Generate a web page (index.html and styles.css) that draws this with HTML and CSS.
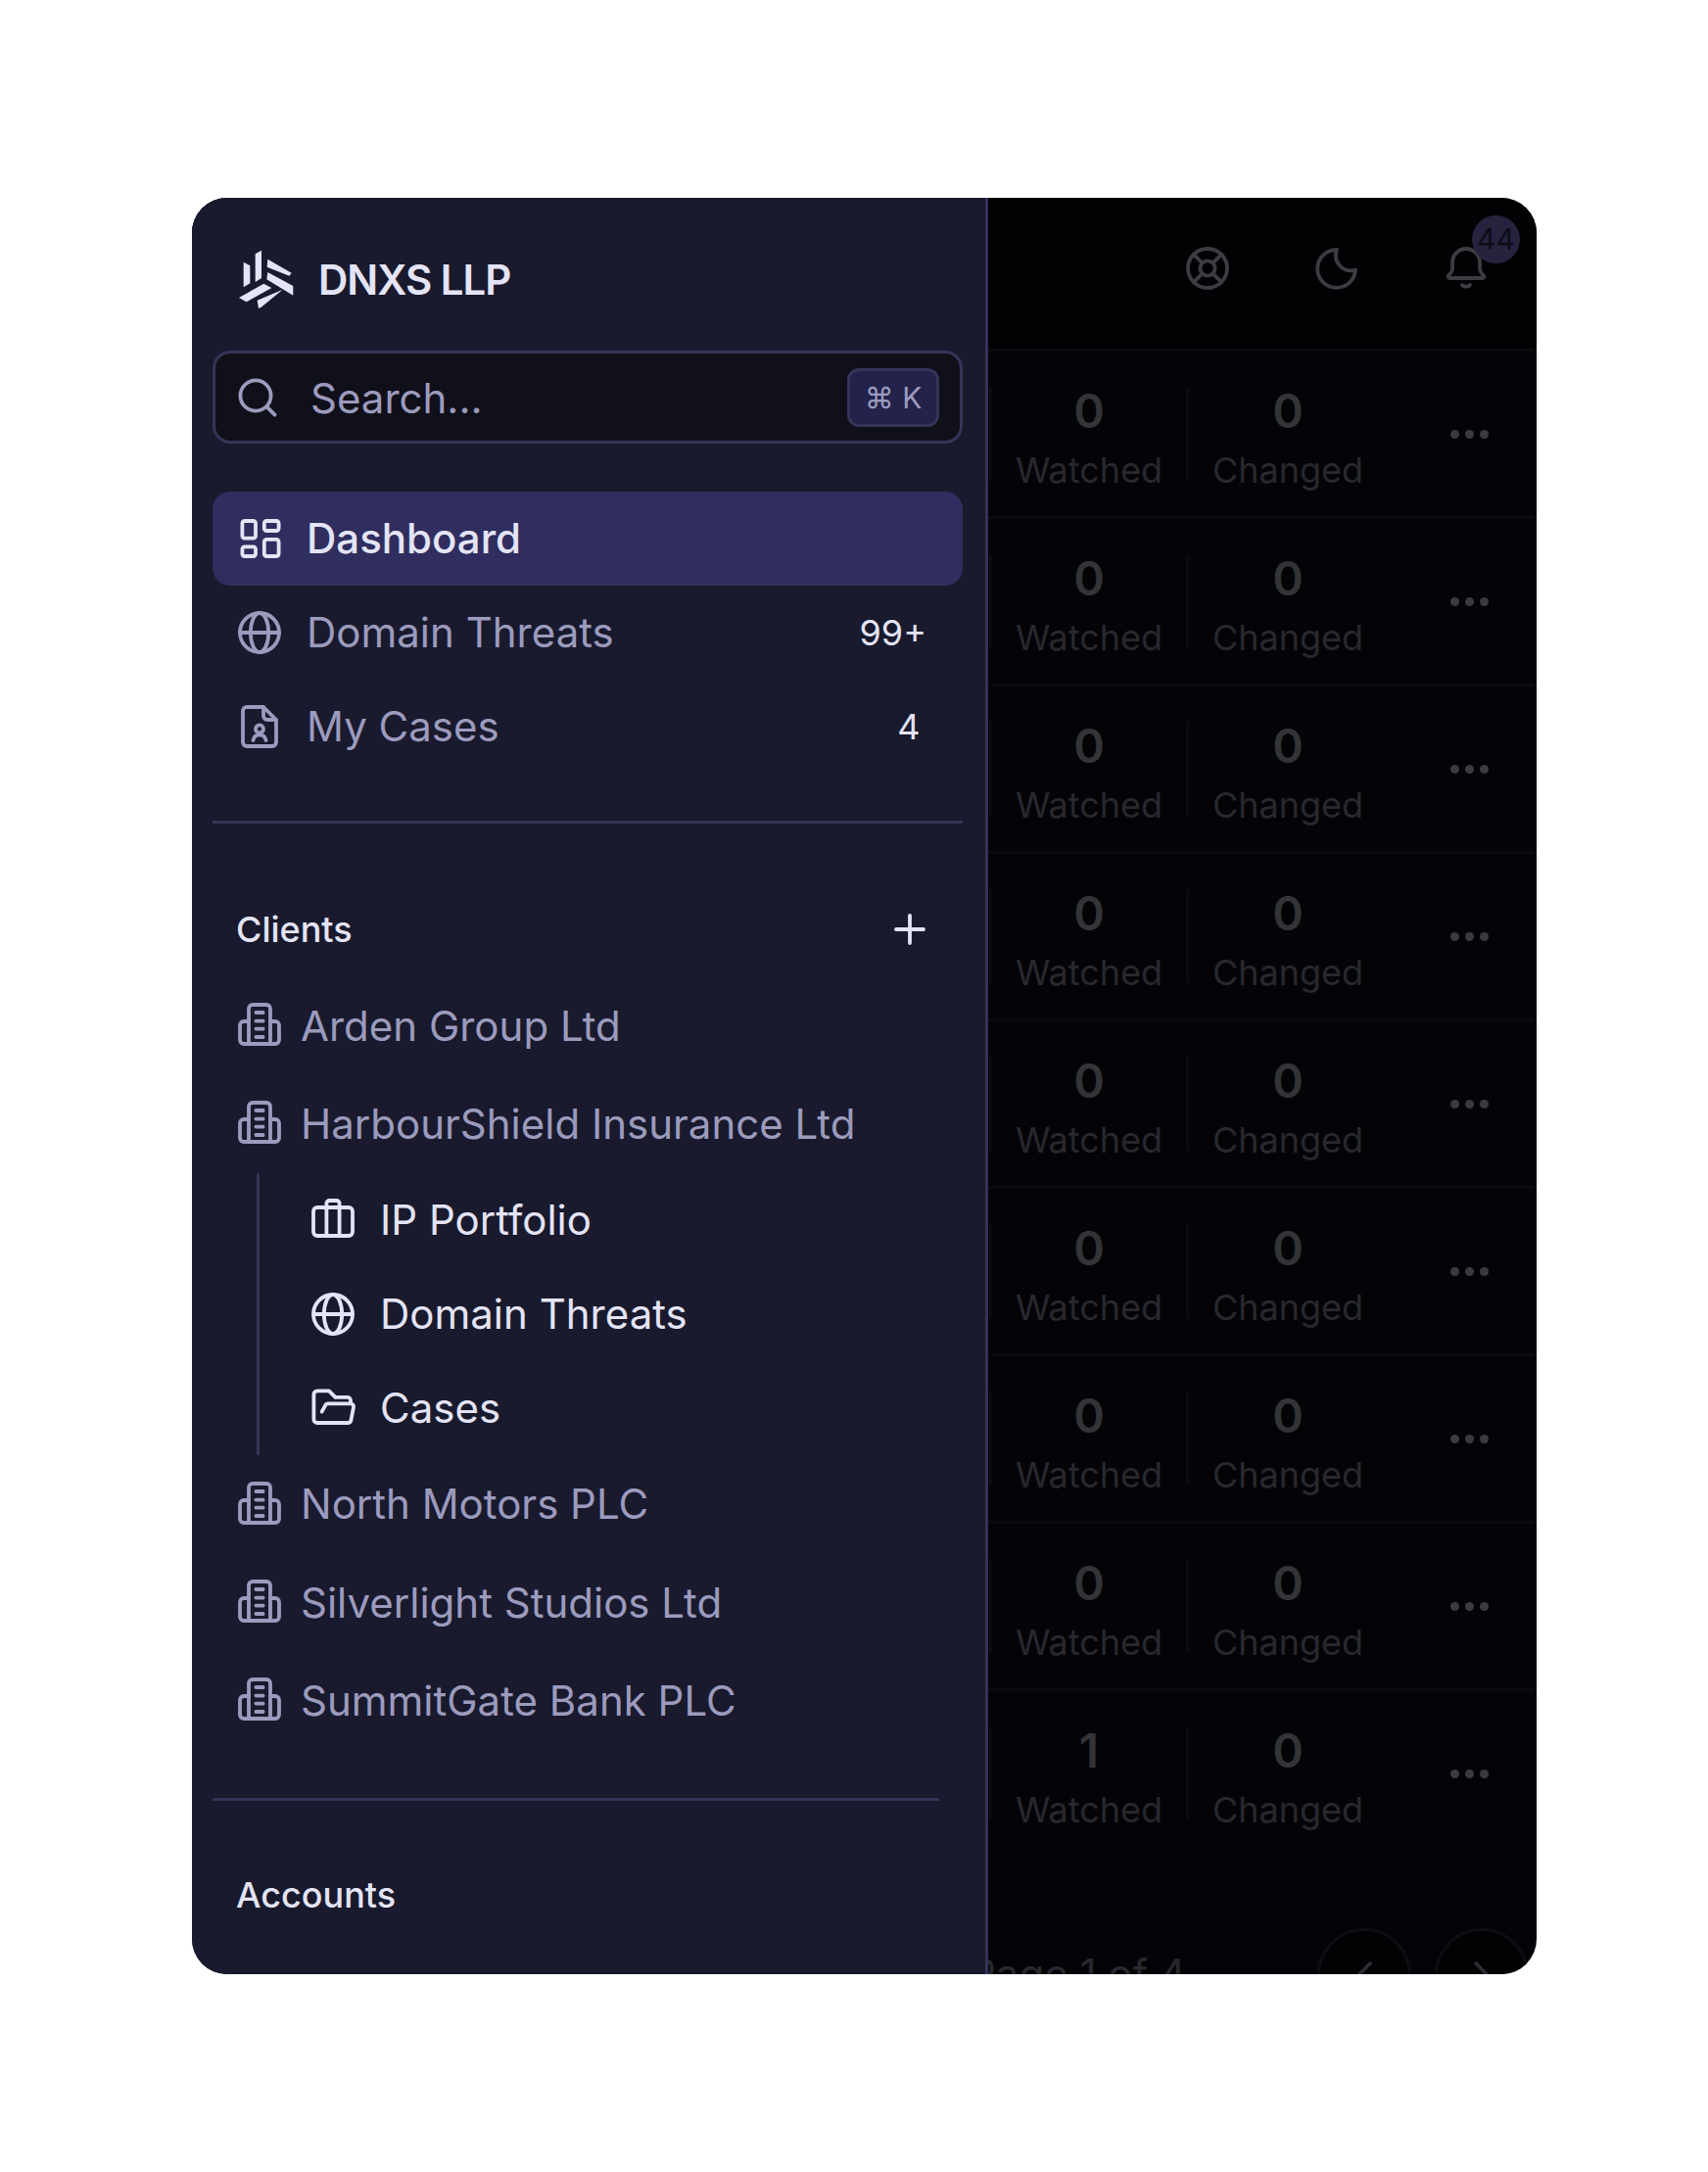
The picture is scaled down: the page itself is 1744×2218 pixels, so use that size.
FILE: index.html
```html
<!DOCTYPE html>
<html lang="en">
<head>
  <meta charset="UTF-8" />
  <meta name="viewport" content="width=device-width, initial-scale=1.0"/>
  <title>DNXS LLP</title>
  <link rel="stylesheet" href="styles.css">
</head>
<body>
  <svg class="sprites" width="0" height="0">
    <symbol id="i-globe" viewBox="0 0 24 24"><circle cx="12" cy="12" r="10"/><path d="M2 12h20"/><ellipse cx="12" cy="12" rx="4.6" ry="10"/></symbol>
    <symbol id="i-building" viewBox="0 0 24 24"><path d="M6.500 21.500V3.500a2 2 0 0 1 2-2h7a2 2 0 0 1 2 2v18"/><path d="M6.500 10H4a2 2 0 0 0-2 2v7.500a2 2 0 0 0 2 2h16a2 2 0 0 0 2-2V12a2 2 0 0 0-2-2h-2.500"/><path d="M10.200 5.500h3.600M10.200 9.800h3.600M10.200 13.800h3.600M10.200 18h3.600"/></symbol>
  </svg>

  <div class="card">
    <!-- Page behind the drawer -->
    <main class="main">
      <header class="topbar">
        <svg class="icon" viewBox="0 0 24 24"><circle cx="12" cy="12" r="10"/><circle cx="12" cy="12" r="3.800"/><path d="M14.800 14.800l4.300 4.300M9.200 14.800l-4.300 4.300M4.900 4.900l4.300 4.300M19.100 4.900l-4.300 4.300"/></svg>
        <svg class="icon" viewBox="0 0 24 24"><path d="M12 2.500a7.800 7.800 0 0 0 9.500 10.300A9.700 9.700 0 1 1 12 2.500z"/></svg>
        <div class="bell">
          <svg class="icon" viewBox="0 0 24 24"><path d="M12 2a7 7 0 0 0-7 7v3.500c0 1.500-1.200 2.300-2 3.200-.4.500 0 1.300.7 1.300h16.600c.7 0 1.100-.8.700-1.300-.8-.9-2-1.700-2-3.200V9a7 7 0 0 0-7-7z"/><path d="M10 20.500c.5 1 3.500 1 4 0"/></svg>
          <span class="badge">44</span>
        </div>
      </header>

      <div class="rows">
        <div class="row"><div class="stat"><b>0</b><span>Watched</span></div><div class="stat stat-wide"><b>0</b><span>Changed</span></div><div class="dots"><i></i><i></i><i></i></div></div>
        <div class="row"><div class="stat"><b>0</b><span>Watched</span></div><div class="stat stat-wide"><b>0</b><span>Changed</span></div><div class="dots"><i></i><i></i><i></i></div></div>
        <div class="row"><div class="stat"><b>0</b><span>Watched</span></div><div class="stat stat-wide"><b>0</b><span>Changed</span></div><div class="dots"><i></i><i></i><i></i></div></div>
        <div class="row"><div class="stat"><b>0</b><span>Watched</span></div><div class="stat stat-wide"><b>0</b><span>Changed</span></div><div class="dots"><i></i><i></i><i></i></div></div>
        <div class="row"><div class="stat"><b>0</b><span>Watched</span></div><div class="stat stat-wide"><b>0</b><span>Changed</span></div><div class="dots"><i></i><i></i><i></i></div></div>
        <div class="row"><div class="stat"><b>0</b><span>Watched</span></div><div class="stat stat-wide"><b>0</b><span>Changed</span></div><div class="dots"><i></i><i></i><i></i></div></div>
        <div class="row"><div class="stat"><b>0</b><span>Watched</span></div><div class="stat stat-wide"><b>0</b><span>Changed</span></div><div class="dots"><i></i><i></i><i></i></div></div>
        <div class="row"><div class="stat"><b>0</b><span>Watched</span></div><div class="stat stat-wide"><b>0</b><span>Changed</span></div><div class="dots"><i></i><i></i><i></i></div></div>
        <div class="row row-last"><div class="stat"><b>1</b><span>Watched</span></div><div class="stat stat-wide"><b>0</b><span>Changed</span></div><div class="dots"><i></i><i></i><i></i></div></div>
      </div>

      <div class="pager">
        <span class="pager-text">Page 1 of 4</span>
        <div class="pager-btns">
          <div class="round"><svg class="icon" viewBox="0 0 24 24"><path d="M15 6l-6 6 6 6"/></svg></div>
          <div class="round"><svg class="icon" viewBox="0 0 24 24"><path d="M9 6l6 6-6 6"/></svg></div>
        </div>
      </div>
    </main>

    <!-- Drawer -->
    <aside class="drawer">
      <div class="brand">
        <svg class="logo" viewBox="0 0 198 216">
          <polygon points="26,56 46,67 46,121 26,133"/>
          <polygon points="62,31 81,20 81,105 62,117"/>
          <polygon points="100,47 173,89 166,98 98,71"/>
          <polygon points="100,87 178,129 178,158 97,109"/>
          <polygon points="12,165 88,122 112,135 35,178"/>
          <polygon points="68,173 146,140 80,194 72,198"/>
        </svg>
        <span class="brand-name">DNXS LLP</span>
      </div>

      <div class="search">
        <svg class="icon" viewBox="0 0 24 24"><circle cx="11" cy="11" r="7.800"/><path d="M16.800 16.800l4 4"/></svg>
        <span class="search-text">Search...</span>
        <span class="kbd">⌘ K</span>
      </div>

      <nav class="nav">
        <a class="nav-item active">
          <svg class="icon" viewBox="0 0 24 24"><rect x="3.200" y="3" width="6.800" height="8.800" rx="1.200"/><rect x="3.200" y="16.200" width="6.800" height="4.800" rx="1.200"/><rect x="14.400" y="3" width="7.400" height="5" rx="1.200"/><rect x="14.400" y="12.400" width="7.400" height="8.600" rx="1.200"/></svg>
          <span>Dashboard</span>
        </a>
        <a class="nav-item">
          <svg class="icon"><use href="#i-globe"/></svg>
          <span>Domain Threats</span>
          <em class="count">99+</em>
        </a>
        <a class="nav-item">
          <svg class="icon" viewBox="0 0 24 24"><path d="M14 2H5.500a2 2 0 0 0-2 2v16a2 2 0 0 0 2 2h13a2 2 0 0 0 2-2V8.500z"/><path d="M14 2v4.500a2 2 0 0 0 2 2h4.500"/><circle cx="12" cy="13.200" r="2"/><path d="M8.700 19c.4-1.800 1.700-2.800 3.300-2.800s2.900 1 3.300 2.800"/></svg>
          <span>My Cases</span>
          <em class="count">4</em>
        </a>
      </nav>

      <hr class="rule rule-wide">

      <div class="section-head">
        <span>Clients</span>
        <svg class="icon" viewBox="0 0 24 24"><path d="M12 5v14M5 12h14"/></svg>
      </div>

      <a class="client"><svg class="icon"><use href="#i-building"/></svg><span>Arden Group Ltd</span></a>
      <a class="client"><svg class="icon"><use href="#i-building"/></svg><span>HarbourShield Insurance Ltd</span></a>
      <div class="sub">
        <a class="sub-item">
          <svg class="icon" viewBox="0 0 24 24"><rect x="2" y="5.500" width="20" height="14.500" rx="2"/><path d="M8.700 20V3.500a1.500 1.500 0 0 1 1.500-1.500h3.600a1.500 1.500 0 0 1 1.500 1.500V20"/></svg>
          <span>IP Portfolio</span>
        </a>
        <a class="sub-item">
          <svg class="icon"><use href="#i-globe"/></svg>
          <span>Domain Threats</span>
        </a>
        <a class="sub-item">
          <svg class="icon" viewBox="0 0 24 24"><path d="M21 9.700V8a1.600 1.600 0 0 0-1.600-1.600h-6.200L10 3.200H4A1.800 1.800 0 0 0 2.200 5v12.700A1.800 1.800 0 0 0 4 19.500h15.500a1.800 1.800 0 0 0 1.700-1.300l1.300-6.700a1.500 1.500 0 0 0-1.500-1.800H9.500a1.800 1.800 0 0 0-1.600 1.200l-1.600 2.900"/></svg>
          <span>Cases</span>
        </a>
      </div>
      <a class="client"><svg class="icon"><use href="#i-building"/></svg><span>North Motors PLC</span></a>
      <a class="client"><svg class="icon"><use href="#i-building"/></svg><span>Silverlight Studios Ltd</span></a>
      <a class="client"><svg class="icon"><use href="#i-building"/></svg><span>SummitGate Bank PLC</span></a>

      <hr class="rule rule-short">

      <div class="section-head section-accounts"><span>Accounts</span></div>
    </aside>
  </div>
</body>
</html>
```

FILE: styles.css
```css
* {
  box-sizing: border-box;
}
body {
  font-family: Inter, "DejaVu Sans", sans-serif;
  background: #fff;
  margin: 0;
  height: 100vh;
  padding: 202px 0 0 196px;
  overflow: hidden;
}
.sprites {
  position: absolute;
}
.icon {
  width: 48px;
  height: 48px;
  flex: none;
  fill: none;
  stroke: currentColor;
  stroke-width: 1.9;
  stroke-linecap: round;
  stroke-linejoin: round;
}
.card {
  position: relative;
  width: 1373px;
  height: 1814px;
  border-radius: 36px;
  overflow: hidden;
  background: #040408;
}

/* Dimmed page */
.main {
  height: 100%;
  color: #3c3c42;
}
.topbar {
  height: 157px;
  background: #020204;
  display: flex;
  justify-content: flex-end;
  align-items: center;
  gap: 84px;
  padding: 0 48px 11px 0;
  border-bottom: 3px solid #0b0b0f;
}
.bell {
  position: relative;
  height: 48px;
}
.badge {
  position: absolute;
  left: 30px;
  top: -30px;
  width: 49px;
  height: 49px;
  border-radius: 50%;
  background: #26233f;
  color: #0d0c16;
  font-size: 30px;
  line-height: 49px;
  text-align: center;
}
.rows {
  padding-left: 816px;
}
.row {
  height: 171px;
  display: flex;
  align-items: center;
  border-bottom: 3px solid #0b0b0f;
  margin-left: -3px;
  padding-left: 1px;
}
.row-last {
  border-bottom-color: transparent;
}
.stat {
  width: 201px;
  height: 96px;
  border-left: 3px solid #0b0b0f;
  text-align: center;
}
.stat-wide {
  width: 205px;
}
.stat b {
  display: block;
  margin-top: 1px;
  font-size: 48px;
  line-height: 48px;
  font-weight: 600;
  color: #333338;
}
.stat span {
  display: block;
  margin-top: 12px;
  font-size: 36px;
  line-height: 48px;
  color: #28282e;
}
.dots {
  display: flex;
  gap: 6px;
  margin-left: 65px;
}
.dots i {
  width: 9px;
  height: 9px;
  border-radius: 50%;
  background: #3a3a40;
}
.pager {
  display: flex;
  justify-content: space-between;
  align-items: center;
  height: 96px;
  margin-top: 71px;
  padding: 0 8px 0 794px;
}
.pager-text {
  margin-bottom: 4px;
  font-size: 42px;
  color: #28282e;
}
.pager-btns {
  display: flex;
  gap: 24px;
}
.round {
  width: 96px;
  height: 96px;
  border: 3px solid #0e0e12;
  border-radius: 50%;
  display: flex;
  align-items: center;
  justify-content: center;
  background: #020204;
  color: #2c2c32;
}

/* Drawer */
.drawer {
  position: absolute;
  left: 0;
  top: 0;
  bottom: 0;
  width: 813px;
  background: #191a2d;
  border-right: 3px solid #34325a;
  padding: 0 21px;
  color: #9c9bbd;
  overflow: hidden;
}
.brand {
  height: 156px;
  display: flex;
  align-items: center;
  padding: 10px 0 0 23px;
  gap: 19px;
  color: #e4e4f5;
}
.logo {
  width: 66px;
  height: 72px;
  fill: currentColor;
}
.brand-name {
  font-size: 42px;
  font-weight: 600;
  letter-spacing: -1px;
}
.search {
  height: 95px;
  width: 766px;
  display: flex;
  align-items: center;
  background: #10101a;
  border: 3px solid #363458;
  border-radius: 18px;
  padding: 0 21px 0 19px;
}
.search-text {
  flex: 1;
  margin: 2px 0 0 30px;
  font-size: 42px;
}
.kbd {
  width: 94px;
  height: 60px;
  border: 3px solid #363458;
  border-radius: 12px;
  background: #22224a;
  font-size: 30px;
  line-height: 54px;
  text-align: center;
}
.nav {
  margin-top: 49px;
  width: 766px;
}
.nav-item {
  height: 96px;
  display: flex;
  align-items: center;
  gap: 24px;
  padding: 0 37px 0 24px;
  border-radius: 18px;
  font-size: 42px;
}
.nav-item.active {
  background: #2f2e5f;
  color: #e4e4f5;
  font-weight: 500;
}
.nav-item span {
  flex: 1;
  margin-bottom: 2px;
}
.count {
  min-width: 36px;
  font-size: 36px;
  font-style: normal;
  text-align: center;
  color: #e4e4f5;
}
.rule {
  border: none;
  height: 3px;
  margin: 0;
  background: #363458;
}
.rule-wide {
  width: 766px;
  margin-top: 48px;
}
.rule-short {
  width: 742px;
  margin-top: 50px;
}
.section-head {
  height: 96px;
  margin-top: 60px;
  display: flex;
  align-items: center;
  justify-content: space-between;
  padding: 0 32px 0 24px;
  font-size: 36px;
  font-weight: 500;
  color: #e4e4f5;
}
.section-accounts {
  margin-top: 48px;
}
.client {
  height: 100.3px;
  display: flex;
  align-items: center;
  gap: 18px;
  padding-left: 24px;
  font-size: 42px;
}
.sub {
  margin-left: 45px;
  border-left: 3px solid #363458;
  padding-left: 51px;
  color: #e4e4f5;
}
.sub-item {
  height: 96px;
  display: flex;
  align-items: center;
  gap: 24px;
  font-size: 42px;
}
```
